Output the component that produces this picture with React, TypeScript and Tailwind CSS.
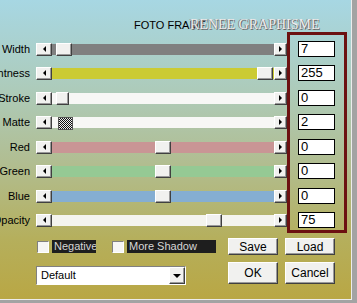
import React from "react";

const rows = [
  { label: "Width", track: "bg-[#808080]", thumb: "left-[4px] w-[16px]", value: "7", gap: "" },
  { label: "Brightness", track: "bg-[#cbcb33]", thumb: "left-[205px] w-[16px]", value: "255", gap: "mt-[8px]" },
  { label: "Stroke", track: "bg-[#f7f7f5]", thumb: "left-[4px] w-[13px]", value: "0", gap: "mt-[9px]" },
  { label: "Matte", track: "bg-[#f7f7f5]", thumb: "left-[6px] w-[15px]", value: "2", gap: "mt-[8px]", checker: true },
  { label: "Red", track: "bg-[#c99595]", thumb: "left-[103px] w-[16px]", value: "0", gap: "mt-[9px]" },
  { label: "Green", track: "bg-[#95c994]", thumb: "left-[103px] w-[16px]", value: "0", gap: "mt-[8px]" },
  { label: "Blue", track: "bg-[#85aed2]", thumb: "left-[103px] w-[16px]", value: "0", gap: "mt-[9px]" },
  { label: "Opacity", track: "bg-[#f4f4ee]", thumb: "left-[154px] w-[16px]", value: "75", gap: "mt-[8px]" },
];

const raised =
  "bg-[#f1f1ef] border border-t-white border-l-white border-r-[#404040] border-b-[#404040] shadow-[inset_-1px_-1px_0_#9a9a9a]";

function ArrowLeft() {
  return <span className="w-0 h-0 border-y-[3px] border-y-transparent border-r-[3px] border-r-black" />;
}

function ArrowRight() {
  return <span className="w-0 h-0 border-y-[3px] border-y-transparent border-l-[3px] border-l-black" />;
}

function Button({ children }: { children: React.ReactNode }) {
  return (
    <div className={`${raised} w-[50px] flex items-center justify-center text-[12px] font-['Liberation_Sans_Narrow','Liberation_Sans',sans-serif] text-black`}>
      {children}
    </div>
  );
}

function Checkbox({ label, width }: { label: string; width: string }) {
  return (
    <div className="flex items-center">
      <div className="w-[12px] h-[12px] bg-[#f6f6f4] border border-t-[#808080] border-l-[#808080] border-r-white border-b-white" />
      <div className={`${width} h-[13px] ml-[3px] bg-[#1e1e1e] text-[#d6d6d6] text-[11px] leading-[13px] pl-[2px] whitespace-nowrap overflow-hidden`}>
        {label}
      </div>
    </div>
  );
}

export default function App() {
  return (
    <div className="w-[357px] h-[303px] bg-[#a3a3a3] overflow-hidden font-['Liberation_Sans',sans-serif] text-black">
      <div className="relative w-[352px] h-[300px] border-r border-b border-[#ececec] bg-[linear-gradient(to_bottom,#a7d7e3_0%,#adcbba_30%,#b1bd90_55%,#b5af5c_80%,#b9a744_100%)]">
        {/* Title */}
        <div className="h-[32px] pl-[134px] pt-[19px] text-[11px] leading-[13px]">FOTO FRAME</div>
        <div className="absolute left-[190px] top-[17px] text-[14px] leading-[16px] font-['Liberation_Serif',serif] text-[#ececec] whitespace-nowrap [text-shadow:1px_1px_0_#6a6a6a,-1px_0_0_#8a8a8a]">
          RENEE GRAPHISME
        </div>

        {/* Sliders + values */}
        <div className="flex">
          <div className="w-[287px] pt-[9px]">
            {rows.map((r) => (
              <div key={r.label} className={`${r.gap} h-[16px] flex items-center`}>
                <div className="w-[33px] pr-[3px] flex justify-end overflow-hidden">
                  <span className="text-[11px] leading-[16px] whitespace-nowrap">{r.label}</span>
                </div>
                <div className={`${raised} ml-[3px] w-[16px] h-[13px] flex items-center justify-center`}>
                  <ArrowLeft />
                </div>
                <div className={`relative flex-1 h-[11px] ${r.track}`}>
                  <div
                    className={`absolute top-[-1px] h-[13px] ${r.thumb} ${
                      r.checker
                        ? "border border-[#555] bg-[repeating-conic-gradient(#111_0%_25%,#eee_0%_50%)] bg-size-[2px_2px] top-[0px] h-[11px]"
                        : raised
                    }`}
                  />
                </div>
                <div className={`${raised} w-[13px] h-[13px] flex items-center justify-center`}>
                  <ArrowRight />
                </div>
              </div>
            ))}
          </div>

          <div className="w-[60px] h-[201px] mt-0 border-[3px] border-[#6c1111] pt-[6px] pl-[8px]">
            {rows.map((r) => (
              <div
                key={r.label}
                className={`${r.gap} w-[37px] h-[16px] bg-white border border-black pl-[2px] text-[13px] leading-[14px] font-['Liberation_Sans_Narrow','Liberation_Sans',sans-serif]`}
              >
                {r.value}
              </div>
            ))}
          </div>
        </div>

        {/* Bottom controls */}
        <div className="flex mt-[5px]">
          <div className="w-[228px] pl-[37px]">
            <div className="h-[17px] flex items-center">
              <Checkbox label="Negative" width="w-[44px]" />
              <div className="ml-[16px]">
                <Checkbox label="More Shadow" width="w-[89px]" />
              </div>
            </div>
            <div className="mt-[11px] -ml-[1px] w-[150px] h-[19px] bg-white border border-t-[#808080] border-l-[#808080] border-r-white border-b-white flex items-center">
              <span className="flex-1 pl-[4px] text-[11px] leading-[17px]">Default</span>
              <div className={`${raised} w-[16px] h-[17px] flex items-center justify-center`}>
                <span className="w-0 h-0 border-x-[4px] border-x-transparent border-t-[4px] border-t-black" />
              </div>
            </div>
          </div>
          <div className="grid grid-cols-[50px_50px] gap-x-[7px] gap-y-[7px] grid-rows-[17px_22px]">
            <Button>Save</Button>
            <Button>Load</Button>
            <Button>OK</Button>
            <Button>Cancel</Button>
          </div>
        </div>
      </div>
    </div>
  );
}
